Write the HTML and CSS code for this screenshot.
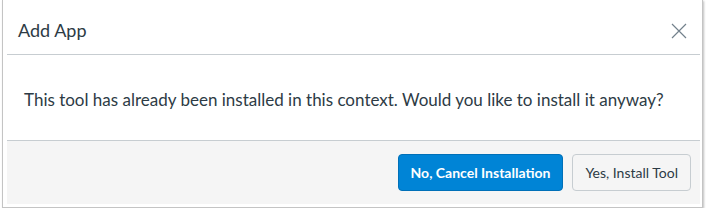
FILE: index.html
```html
<!DOCTYPE html>
<html lang="en">
<head>
    <meta charset="UTF-8">
    <title>Add App</title>
    <link rel="stylesheet" href="styles.css">
</head>
<body>
    <div class="frame">
        <div class="modal">
            <div class="modal-header">
                <h2>Add App</h2>
                <button class="close" aria-label="Close">
                    <svg width="16" height="16" viewBox="0 0 16 16">
                        <path d="M1 1 L15 15 M15 1 L1 15" stroke="#73818c" stroke-width="1.2" fill="none"/>
                    </svg>
                </button>
            </div>
            <div class="modal-body">
                <p>This tool has already been installed in this context. Would you like to install it anyway?</p>
            </div>
            <div class="modal-footer">
                <button class="button primary">No, Cancel Installation</button>
                <button class="button">Yes, Install Tool</button>
            </div>
        </div>
    </div>
</body>
</html>
```

FILE: styles.css
```css
* {
    margin: 0;
    padding: 0;
    box-sizing: border-box;
}

body {
    font-family: Lato, 'Helvetica Neue', Arial, sans-serif;
    background: #ffffff;
    color: #2d3b45;
}

.frame {
    width: 701px;
    height: 208px;
    margin-left: 2px;
    padding: 7px 2px 2px 4px;
    border: 1px solid #c4c4c4;
    border-top: none;
    box-shadow: 1px 1px 2px rgba(0, 0, 0, 0.25);
    background: #fff;
}

.modal-header {
    height: 48px;
    display: flex;
    align-items: center;
    justify-content: space-between;
    padding: 0 10px 0 11px;
    border-bottom: 1px solid #c7cdd1;
}

.modal-header h2 {
    font-size: 18px;
    font-weight: 400;
    margin-top: -2px;
}

.close {
    background: none;
    border: none;
    width: 22px;
    height: 22px;
    display: flex;
    align-items: center;
    justify-content: center;
}

.modal-body {
    height: 85px;
    display: flex;
    align-items: center;
    padding: 0 17px;
}

.modal-body p {
    font-size: 17px;
    margin-top: 3px;
}

.modal-footer {
    height: 64px;
    background: #f5f5f5;
    border-top: 1px solid #c7cdd1;
    display: flex;
    align-items: center;
    justify-content: flex-end;
    gap: 9px;
    padding: 0 9px;
}

.button {
    font-family: Lato, 'Helvetica Neue', Arial, sans-serif;
    font-size: 14px;
    height: 37px;
    padding: 0 12px;
    border-radius: 4px;
    border: 1px solid #c7cdd1;
    background: #f5f5f5;
    color: #2d3b45;
}

.button.primary {
    background: #0084d6;
    border-color: #0070b8;
    color: #fff;
    font-weight: 700;
}
```
